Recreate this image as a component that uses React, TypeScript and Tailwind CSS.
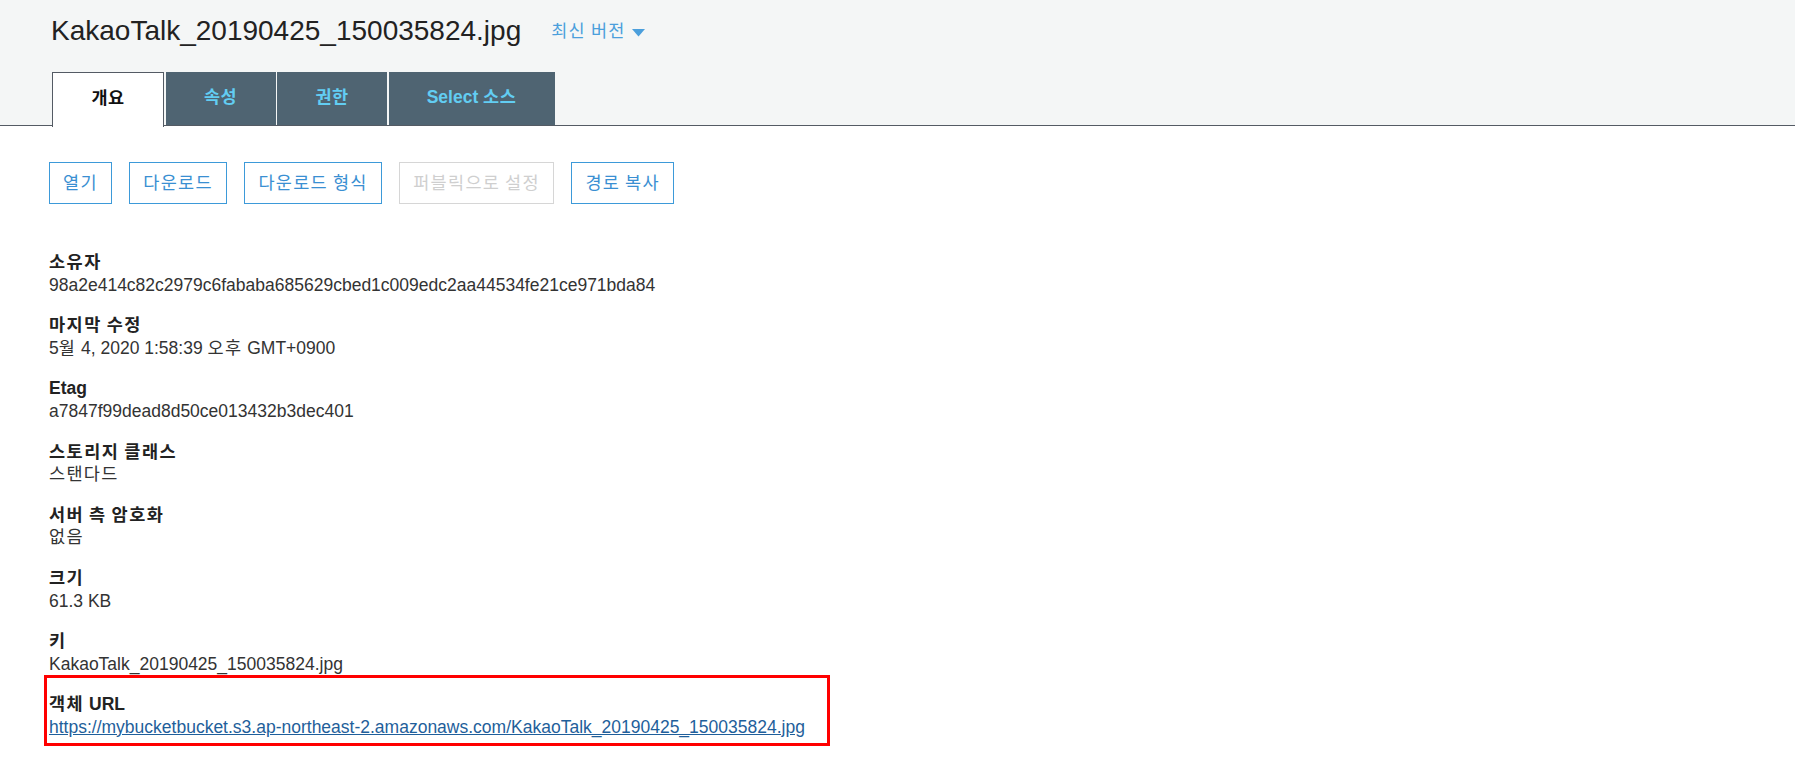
import React from "react";

const font = { fontFamily: '"Liberation Sans", "Noto Sans CJK KR", sans-serif' };

function K({ text, sp = "tracking-[1.3px]" }: { text: string; sp?: string }) {
  const parts = text.split(/([\uAC00-\uD7A3]+)/);
  return (
    <span>
      {parts.map((p, i) =>
        /[\uAC00-\uD7A3]/.test(p) ? (
          <span key={i} className={sp}>
            {p}
          </span>
        ) : (
          <React.Fragment key={i}>{p}</React.Fragment>
        )
      )}
    </span>
  );
}

const rows: { label: string; value: string }[] = [
  { label: "소유자", value: "98a2e414c82c2979c6fababa685629cbed1c009edc2aa44534fe21ce971bda84" },
  { label: "마지막 수정", value: "5월 4, 2020 1:58:39 오후 GMT+0900" },
  { label: "Etag", value: "a7847f99dead8d50ce013432b3dec401" },
  { label: "스토리지 클래스", value: "스탠다드" },
  { label: "서버 측 암호화", value: "없음" },
  { label: "크기", value: "61.3 KB" },
  { label: "키", value: "KakaoTalk_20190425_150035824.jpg" },
];

const tabCls =
  "ml-[1.5px] h-[53px] bg-[#4f6472] flex items-start justify-center pt-[12px] text-[17.5px] font-bold text-[#62cdf2]";

const btnCls = "h-[42px] px-[13px] border-[1.5px] text-[17.5px] leading-[22px] bg-white";

export default function App() {
  return (
    <div className="min-h-[757px] w-full bg-white text-[#333]" style={font}>
      <div className="h-[126px] bg-[#f4f6f6] border-b-[1.5px] border-[#545b64] flex flex-col">
        <div className="flex items-baseline pl-[51px] pt-[14px]">
          <h1 className="text-[28px] leading-[34px] text-[#222] font-normal">KakaoTalk_20190425_150035824.jpg</h1>
          <div className="ml-[30px] flex items-center text-[17.5px] text-[#4b9fdc] relative top-[-3px]">
            <K text="최신 버전" />
            <svg width="13" height="8" viewBox="0 0 13 8" className="ml-[6px] mt-[3px]">
              <path d="M0 0 L13 0 L6.5 7.5 Z" fill="#4b9fdc" />
            </svg>
          </div>
        </div>
        <div className="flex pl-[52px] mt-auto mb-[-1.5px] h-[55px]">
          <div className="w-[112px] bg-white border-[1.5px] border-b-0 border-[#545b64] flex items-start justify-center pt-[12px] text-[17.5px] font-bold text-[#111]">
            <K text="개요" sp="tracking-[0.5px]" />
          </div>
          <div className={`${tabCls} w-[110px]`}>
            <K text="속성" sp="tracking-[0.5px]" />
          </div>
          <div className={`${tabCls} w-[110px]`}>
            <K text="권한" sp="tracking-[0.5px]" />
          </div>
          <div className={`${tabCls} w-[166px]`}>
            <K text="Select 소스" sp="tracking-[0.5px]" />
          </div>
        </div>
      </div>

      <div className="pl-[49px]">
        <div className="flex gap-[17.5px] mt-[36px]">
          {["열기", "다운로드", "다운로드 형식"].map((t) => (
            <button key={t} className={`${btnCls} border-[#3d9ad9] text-[#3a8fd2]`}>
              <K text={t} />
            </button>
          ))}
          <button className={`${btnCls} border-[#d6d6d6] text-[#cfcfcf]`}>
            <K text="퍼블릭으로 설정" />
          </button>
          <button className={`${btnCls} border-[#3d9ad9] text-[#3a8fd2]`}>
            <K text="경로 복사" />
          </button>
        </div>

        <div className="mt-[47px] text-[17.5px] leading-[22.6px]">
          {rows.map((r) => (
            <div key={r.label} className="mb-[18px]">
              <div className="font-bold text-[#222]">
                <K text={r.label} sp="tracking-[1.5px]" />
              </div>
              <div className="text-[#333]">
                <K text={r.value} />
              </div>
            </div>
          ))}
          <div className="relative">
            <div className="font-bold text-[#222]">
              <K text="객체 URL" sp="tracking-[1.5px]" />
            </div>
            <div>
              <a href="#" className="underline text-[#1f5f9b]">
                https://mybucketbucket.s3.ap-northeast-2.amazonaws.com/KakaoTalk_20190425_150035824.jpg
              </a>
            </div>
            <div className="absolute left-[-5px] top-[-18px] w-[786px] h-[71px] border-[3px] border-[#ff0000] pointer-events-none" />
          </div>
        </div>
      </div>
    </div>
  );
}
